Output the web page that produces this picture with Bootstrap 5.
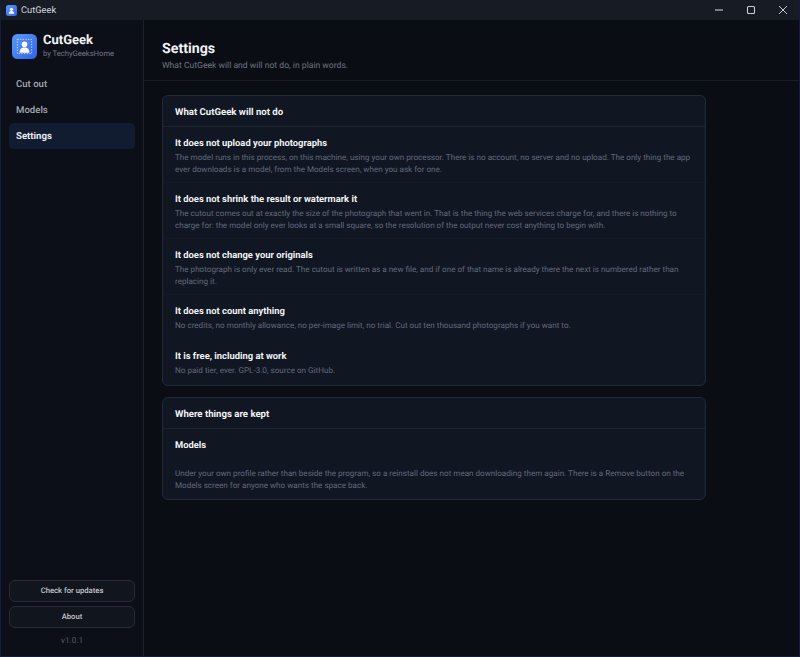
<!DOCTYPE html>
<html lang="en">
<head>
<meta charset="utf-8">
<title>CutGeek</title>
<link href="https://cdn.jsdelivr.net/npm/bootstrap@5.3.0/dist/css/bootstrap.min.css" rel="stylesheet">
<style>
html,body{height:100%;margin:0;overflow:hidden}
body{background:#0a0d14;font-family:Roboto,"Noto Sans",sans-serif;color:#e8ebf0;text-rendering:geometricPrecision}
.win{width:800px;height:657px;display:flex;flex-direction:column;border:1px solid #121d40;border-top:0}
.tbar{height:20px;flex:none;background:#171b24;padding-left:5px;gap:4px;font-size:9.3px;color:#d5d8de}
.tbar span{padding-top:1px}
.tctl{width:32px;height:20px;display:flex;align-items:center;justify-content:center}
.bodyrow{flex:1;min-height:0}
.side{width:143px;flex:none;background:#0c0f18;border-right:1px solid #1d222d;padding:12px 8px 0 8px}
.brandt{font-size:13px;font-weight:700;color:#f1f3f6;line-height:15px}
.brands{font-size:7.7px;letter-spacing:-.04px;color:#6f7684;line-height:11px}
.brandrow{gap:6px;margin:0 0 11px 3px;height:28px}
.navi{height:26px;padding:2px 7px 0;display:flex;align-items:center;font-size:9.6px;color:#a4a9b4;border-radius:5px;font-weight:500}
.navi.on{background:#111c30;color:#e8ebf0;font-weight:700}
.sbtn{height:22px;margin-bottom:4px;border:1px solid #262b37;border-radius:6px;background:#11151e;color:#c2c6ce;font-size:7.7px;font-weight:500;display:flex;align-items:center;justify-content:center}
.ver{font-size:8.2px;color:#565c69;text-align:center;margin:8px 0 9px;line-height:11px}
.mainp{background:#0a0d14;min-width:0}
.mhead{height:61px;border-bottom:1px solid #181c26;padding:20px 18px 0 18px}
.mhead h1{font-size:14.2px;font-weight:700;color:#f1f3f6;margin:0;line-height:18px}
.mhead p{font-size:8.6px;color:#6f7684;margin:2px 0 0;line-height:12px}
.mbody{padding:14px 18px;width:580px}
.panel{background:#101622;border:1px solid #222a3a;border-radius:6px;margin-bottom:11px;overflow:hidden}
.phead{height:31px;padding:4px 12px 0;display:flex;align-items:center;font-size:9.6px;font-weight:700;color:#f1f3f6;border-bottom:1px solid #1c2230}
.pit{padding:11px 12px 0;height:56px;border-bottom:1px solid #141a26}
.pit h2{font-size:9.4px;font-weight:700;color:#f1f3f6;margin:0;line-height:12px}
.pit p{font-size:8.1px;color:#626b7d;margin:1px 0 0;line-height:12px}
.short{height:45px;border-bottom:0}
.last{border-bottom:0;height:45px}
.tall{border-bottom:0;height:70px}
.tall p{margin-top:15px}
</style>
</head>
<body>
<div class="win">
  <div class="tbar d-flex align-items-center">
    <svg width="11" height="11" viewBox="0 0 28 28"><defs><linearGradient id="g1" x1="0" y1="0" x2="1" y2="1"><stop offset="0" stop-color="#5b9bf8"/><stop offset="1" stop-color="#2f62ea"/></linearGradient></defs><rect width="28" height="28" rx="6" fill="url(#g1)"/><circle cx="14" cy="11" r="4" fill="#fff"/><path d="M7 22c0-5 3-7 7-7s7 2 7 7z" fill="#fff"/></svg>
    <span>CutGeek</span>
    <div class="ms-auto d-flex">
      <div class="tctl"><svg width="10" height="10" viewBox="0 0 10 10"><path d="M1 5h8" stroke="#c9ccd2" stroke-width="1.1"/></svg></div>
      <div class="tctl"><svg width="10" height="10" viewBox="0 0 10 10"><rect x="1.5" y="1.5" width="7" height="7" rx="1" fill="none" stroke="#c9ccd2" stroke-width="1.1"/></svg></div>
      <div class="tctl"><svg width="10" height="10" viewBox="0 0 10 10"><path d="M1 1l8 8M9 1l-8 8" stroke="#c9ccd2" stroke-width="1"/></svg></div>
    </div>
  </div>
  <div class="bodyrow d-flex">
    <aside class="side d-flex flex-column">
      <div class="brandrow d-flex align-items-center">
        <svg width="25" height="25" viewBox="0 0 28 28"><defs><linearGradient id="g2" x1="0" y1="0" x2="1" y2="1"><stop offset="0" stop-color="#5b9bf8"/><stop offset="1" stop-color="#2f62ea"/></linearGradient></defs><rect width="28" height="28" rx="6" fill="url(#g2)"/><rect x="6" y="6" width="16" height="16" fill="none" stroke="#cfe0ff" stroke-width="1" stroke-dasharray="1.5 1.5"/><circle cx="14" cy="11.5" r="3.2" fill="#fff"/><path d="M8.5 21c0-4.500 2-6 5.500-6s5.500 1.500 5.500 6z" fill="#fff"/></svg>
        <div><div class="brandt">CutGeek</div><div class="brands">by TechyGeeksHome</div></div>
      </div>
      <div class="navi">Cut out</div>
      <div class="navi">Models</div>
      <div class="navi on">Settings</div>
      <div class="mt-auto">
        <div class="sbtn">Check for updates</div>
        <div class="sbtn">About</div>
        <div class="ver">v1.0.1</div>
      </div>
    </aside>
    <main class="mainp flex-grow-1">
      <div class="mhead"><h1>Settings</h1><p>What CutGeek will and will not do, in plain words.</p></div>
      <div class="mbody">
        <section class="panel">
          <div class="phead">What CutGeek will not do</div>
          <div class="pit"><h2>It does not upload your photographs</h2><p>The model runs in this process, on this machine, using your own processor. There is no account, no server and no upload. The only thing the app ever downloads is a model, from the Models screen, when you ask for one.</p></div>
          <div class="pit"><h2>It does not shrink the result or watermark it</h2><p>The cutout comes out at exactly the size of the photograph that went in. That is the thing the web services charge for, and there is nothing to charge for: the model only ever looks at a small square, so the resolution of the output never cost anything to begin with.</p></div>
          <div class="pit"><h2>It does not change your originals</h2><p>The photograph is only ever read. The cutout is written as a new file, and if one of that name is already there the next is numbered rather than replacing it.</p></div>
          <div class="pit short"><h2>It does not count anything</h2><p>No credits, no monthly allowance, no per-image limit, no trial. Cut out ten thousand photographs if you want to.</p></div>
          <div class="pit last"><h2>It is free, including at work</h2><p>No paid tier, ever. GPL-3.0, source on GitHub.</p></div>
        </section>
        <section class="panel">
          <div class="phead">Where things are kept</div>
          <div class="pit tall"><h2>Models</h2><p>Under your own profile rather than beside the program, so a reinstall does not mean downloading them again. There is a Remove button on the Models screen for anyone who wants the space back.</p></div>
        </section>
      </div>
    </main>
  </div>
</div>
<script src="https://cdn.jsdelivr.net/npm/bootstrap@5.3.0/dist/js/bootstrap.bundle.min.js"></script>
</body>
</html>
